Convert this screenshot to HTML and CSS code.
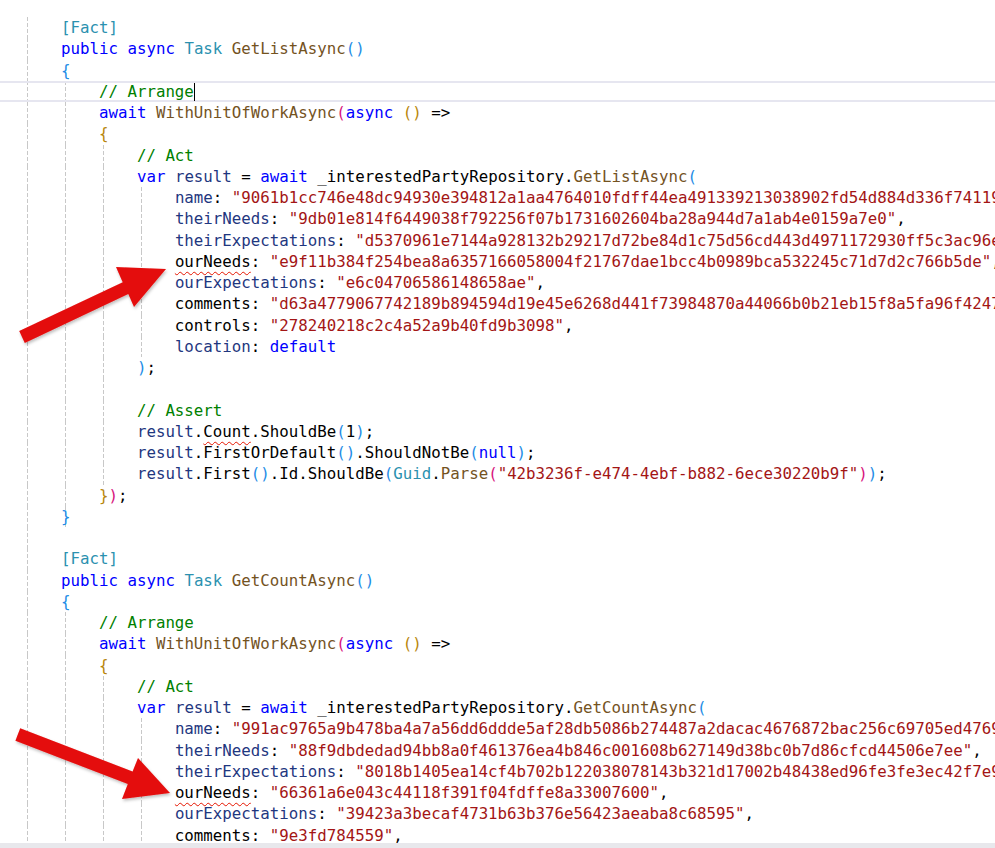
FILE: index.html
```html
<!DOCTYPE html>
<html lang="en">
<head>
    <meta charset="UTF-8">
    <meta name="viewport" content="width=device-width, initial-scale=1.0">
    <title>InterestedPartyRepository_Tests.cs</title>
    <link rel="stylesheet" href="styles.css">
</head>
<body>
    <div class="ide">
        <div class="editor">
<div class="ln g1">    <span class="ty">[Fact]</span></div>
<div class="ln g1">    <span class="kw">public</span> <span class="kw">async</span> <span class="ty">Task</span> <span class="fn">GetListAsync</span><span class="b1">()</span></div>
<div class="ln g1">    <span class="b1">{</span></div>
<div class="ln g2 cur">        <span class="cm">// Arrange</span><span class="caret"></span></div>
<div class="ln g2">        <span class="kw">await</span> <span class="fn">WithUnitOfWorkAsync</span><span class="b2">(</span><span class="kw">async</span> <span class="b3">()</span> =&gt;</div>
<div class="ln g2">        <span class="b3">{</span></div>
<div class="ln g3">            <span class="cm">// Act</span></div>
<div class="ln g3">            <span class="kw">var</span> <span class="pr">result</span> = <span class="kw">await</span> _interestedPartyRepository.<span class="fn">GetListAsync</span><span class="b1">(</span></div>
<div class="ln g4">                <span class="pr">name</span>: <span class="st">"9061b1cc746e48dc94930e394812a1aa4764010fdff44ea491339213038902fd54d884d336f74119b2a"</span>,</div>
<div class="ln g4">                <span class="pr">theirNeeds</span>: <span class="st">"9db01e814f6449038f792256f07b1731602604ba28a944d7a1ab4e0159a7e0"</span>,</div>
<div class="ln g4">                <span class="pr">theirExpectations</span>: <span class="st">"d5370961e7144a928132b29217d72be84d1c75d56cd443d4971172930ff5c3ac96e4f1"</span>,</div>
<div class="ln g4">                <span class="sq">ourNeeds</span>: <span class="st">"e9f11b384f254bea8a6357166058004f21767dae1bcc4b0989bca532245c71d7d2c766b5de"</span>,</div>
<div class="ln g4">                <span class="pr">ourExpectations</span>: <span class="st">"e6c04706586148658ae"</span>,</div>
<div class="ln g4">                comments: <span class="st">"d63a4779067742189b894594d19e45e6268d441f73984870a44066b0b21eb15f8a5fa96f4247a1"</span>,</div>
<div class="ln g4">                controls: <span class="st">"278240218c2c4a52a9b40fd9b3098"</span>,</div>
<div class="ln g4">                <span class="pr">location</span>: <span class="kw">default</span></div>
<div class="ln g3">            <span class="b1">)</span>;</div>
<div class="ln g3"> </div>
<div class="ln g3">            <span class="cm">// Assert</span></div>
<div class="ln g3">            <span class="pr">result</span>.<span class="sq">Count</span>.ShouldBe<span class="b1">(</span>1<span class="b1">)</span>;</div>
<div class="ln g3">            <span class="pr">result</span>.FirstOrDefault<span class="b1">()</span>.ShouldNotBe<span class="b1">(</span><span class="kw">null</span><span class="b1">)</span>;</div>
<div class="ln g3">            <span class="pr">result</span>.First<span class="b1">()</span>.Id.ShouldBe<span class="b1">(</span><span class="ty">Guid</span>.<span class="fn">Parse</span><span class="b2">(</span><span class="st">"42b3236f-e474-4ebf-b882-6ece30220b9f"</span><span class="b2">)</span><span class="b1">)</span>;</div>
<div class="ln g2">        <span class="b3">}</span><span class="b2">)</span>;</div>
<div class="ln g2">    <span class="b1">}</span></div>
<div class="ln g1"> </div>
<div class="ln g1">    <span class="ty">[Fact]</span></div>
<div class="ln g1">    <span class="kw">public</span> <span class="kw">async</span> <span class="ty">Task</span> <span class="fn">GetCountAsync</span><span class="b1">()</span></div>
<div class="ln g1">    <span class="b1">{</span></div>
<div class="ln g2">        <span class="cm">// Arrange</span></div>
<div class="ln g2">        <span class="kw">await</span> <span class="fn">WithUnitOfWorkAsync</span><span class="b2">(</span><span class="kw">async</span> <span class="b3">()</span> =&gt;</div>
<div class="ln g2">        <span class="b3">{</span></div>
<div class="ln g3">            <span class="cm">// Act</span></div>
<div class="ln g3">            <span class="kw">var</span> <span class="pr">result</span> = <span class="kw">await</span> _interestedPartyRepository.<span class="fn">GetCountAsync</span><span class="b1">(</span></div>
<div class="ln g4">                <span class="pr">name</span>: <span class="st">"991ac9765a9b478ba4a7a56dd6ddde5af28db5086b274487a2dacac4676872bac256c69705ed4769c1"</span>,</div>
<div class="ln g4">                <span class="pr">theirNeeds</span>: <span class="st">"88f9dbdedad94bb8a0f461376ea4b846c001608b627149d38bc0b7d86cfcd44506e7ee"</span>,</div>
<div class="ln g4">                <span class="pr">theirExpectations</span>: <span class="st">"8018b1405ea14cf4b702b122038078143b321d17002b48438ed96fe3fe3ec42f7e9d"</span>,</div>
<div class="ln g4">                <span class="sq">ourNeeds</span>: <span class="st">"66361a6e043c44118f391f04fdffe8a33007600"</span>,</div>
<div class="ln g4">                <span class="pr">ourExpectations</span>: <span class="st">"39423a3becaf4731b63b376e56423aeaba8c68595"</span>,</div>
<div class="ln g4">                comments: <span class="st">"9e3fd784559"</span>,</div>
<div class="ln g4">                controls: <span class="st">"c0a1"</span>,</div>
        </div>
        <div class="hscroll"></div>

        <!-- annotation arrows drawn over the code -->
        <svg class="arrows" width="995" height="848" viewBox="0 0 995 848">
            <defs>
                <filter id="shade" x="-20%" y="-20%" width="140%" height="140%">
                    <feDropShadow dx="1" dy="2" stdDeviation="1.5" flood-color="#000" flood-opacity="0.25"/>
                </filter>
            </defs>
            <polygon class="arrow" filter="url(#shade)" points="19.2,331.1 122.7,282.2 116,267 166,269 134,307 128.3,294 24.8,342.9"/>
            <polygon class="arrow" filter="url(#shade)" points="20.2,728.2 132.6,771.5 138,758 170,793 122,799 127.8,784.1 15.4,740.8"/>
        </svg>
    </div>
</body>
</html>
```
FILE: styles.css
```css
* {margin:0; padding:0; box-sizing:border-box;}
body {
    background:#fff; width:995px; height:848px; overflow:hidden;
    font-family:"DejaVu Sans Mono", "Liberation Mono", monospace;
}
.ide {
    --dash:repeating-linear-gradient(#c8c8c8 0 4px, transparent 4px 6px);
    position:relative; height:848px; display:flex; flex-direction:column;
}
.editor {
    height:843px; overflow:hidden; padding-top:17px;
    font-size:15.78px; color:#000;
}
.ln {height:21.26px; line-height:21.26px; padding-left:23px; white-space:pre;}

/* indent guides */
.g1 {background:var(--dash) 27px 0 / 1px 100% no-repeat;}
.g2 {
    background:var(--dash) 27px 0 / 1px 100% no-repeat,
               var(--dash) 65px 0 / 1px 100% no-repeat;
}
.g3 {
    background:var(--dash) 27px 0 / 1px 100% no-repeat,
               var(--dash) 65px 0 / 1px 100% no-repeat,
               var(--dash) 103px 0 / 1px 100% no-repeat;
}
.g4 {
    background:var(--dash) 27px 0 / 1px 100% no-repeat,
               var(--dash) 65px 0 / 1px 100% no-repeat,
               var(--dash) 103px 0 / 1px 100% no-repeat,
               var(--dash) 141px 0 / 1px 100% no-repeat;
}
.cur {box-shadow:inset 0 2px #e6e6f0, inset 0 -2px #e6e6f0;}
.caret {display:inline-block; width:1px; height:18px; background:#000; vertical-align:-4px;}

/* syntax colours */
.kw {color:#0000ff;}
.ty {color:#2b91af;}
.fn {color:#74531f;}
.cm {color:#008000;}
.st {color:#a31515;}
.pr {color:#1f377f;}
.b1 {color:#1e8ce6;}
.b2 {color:#d7127c;}
.b3 {color:#b8860b;}
.sq {
    text-decoration:underline wavy #e51400; text-decoration-thickness:1px;
    text-underline-offset:4px; text-decoration-skip-ink:none;
}

.hscroll {height:5px; background:#e8e8ec;}
.arrows {position:absolute; left:0; top:0; pointer-events:none;}
.arrow {fill:#e40b0b;}
```
